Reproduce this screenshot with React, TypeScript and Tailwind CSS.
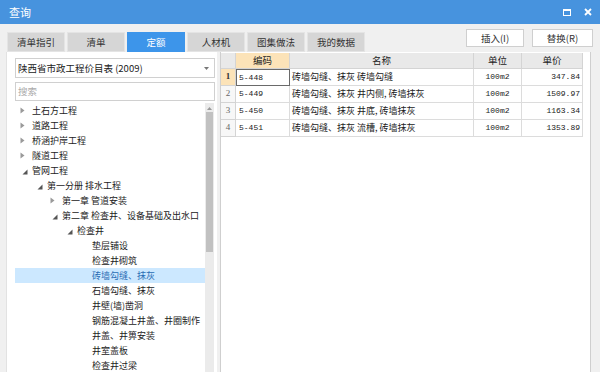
import React from "react";

type Node = { l: number; t: string; s?: "c" | "e"; sel?: boolean };

const tree: Node[] = [
  { l: 0, t: "土石方工程", s: "c" },
  { l: 0, t: "道路工程", s: "c" },
  { l: 0, t: "桥涵护岸工程", s: "c" },
  { l: 0, t: "隧道工程", s: "c" },
  { l: 0, t: "管网工程", s: "e" },
  { l: 1, t: "第一分册 排水工程", s: "e" },
  { l: 2, t: "第一章 管道安装", s: "c" },
  { l: 2, t: "第二章 检查井、设备基础及出水口", s: "e" },
  { l: 3, t: "检查井", s: "e" },
  { l: 4, t: "垫层铺设" },
  { l: 4, t: "检查井砌筑" },
  { l: 4, t: "砖墙勾缝、抹灰", sel: true },
  { l: 4, t: "石墙勾缝、抹灰" },
  { l: 4, t: "井壁(墙)凿洞" },
  { l: 4, t: "钢筋混凝土井盖、井圈制作" },
  { l: 4, t: "井盖、井箅安装" },
  { l: 4, t: "井室盖板" },
  { l: 4, t: "检查井过梁" },
];

const rows = [
  { n: "1", code: "5-448", name: "砖墙勾缝、抹灰 砖墙勾缝", unit: "100m2", price: "347.84" },
  { n: "2", code: "5-449", name: "砖墙勾缝、抹灰 井内侧, 砖墙抹灰", unit: "100m2", price: "1509.97" },
  { n: "3", code: "5-450", name: "砖墙勾缝、抹灰 井底, 砖墙抹灰", unit: "100m2", price: "1163.34" },
  { n: "4", code: "5-451", name: "砖墙勾缝、抹灰 流槽, 砖墙抹灰", unit: "100m2", price: "1353.89" },
];

const tabs = ["清单指引", "清单", "定额", "人材机", "图集做法", "我的数据"];

function Tri({ s }: { s?: "c" | "e" }) {
  if (s === "c")
    return (
      <svg width="5" height="7" viewBox="0 0 5 7" className="ml-[5px]">
        <path d="M0.5 0.5 L4.5 3.5 L0.5 6.5 Z" fill="#9a9a9a" />
      </svg>
    );
  if (s === "e")
    return (
      <svg width="6" height="6" viewBox="0 0 6 6" className="ml-[7px] mt-[3px]">
        <path d="M5.5 0.5 L5.5 5.5 L0.5 5.5 Z" fill="#555" />
      </svg>
    );
  return null;
}

export default function App() {
  return (
    <div
      className="w-[600px] h-[372px] overflow-hidden bg-[#f0f0f0] flex flex-col text-[#222]"
      style={{ fontFamily: '"Noto Sans CJK SC", "Liberation Sans", sans-serif' }}
    >
      {/* title bar */}
      <div className="h-[24px] shrink-0 bg-[#4793de] flex items-center pl-[9px] pr-[8px] text-white">
        <span className="text-[11px] leading-none">查询</span>
        <div className="ml-auto flex items-center gap-[13px]">
          <div className="w-[8px] h-[7px] border border-white border-t-[2px]" />
          <svg width="8" height="8" viewBox="0 0 8 8">
            <path d="M1 1 L7 7 M7 1 L1 7" stroke="white" strokeWidth="1.8" />
          </svg>
        </div>
      </div>

      {/* tab row */}
      <div className="h-[28px] shrink-0 flex pl-[7px] pr-[7px]">
        <div className="flex gap-[2px] self-end">
          {tabs.map((t) => (
            <div
              key={t}
              className={
                t === "定额"
                  ? "w-[58px] h-[20px] flex items-center justify-center text-[9.5px] bg-[#3d95ea] text-white border border-[#3d95ea]"
                  : "w-[58px] h-[20px] flex items-center justify-center text-[9.5px] bg-[#d6d6d6] text-[#333] border border-[#e4e4e4]"
              }
            >
              {t}
            </div>
          ))}
        </div>
        <div className="ml-auto flex gap-[8px] pt-[5px]">
          <div className="w-[58px] h-[18px] bg-white border border-[#cfcfcf] flex items-center justify-center text-[9.5px] text-[#333]">
            插入(I)
          </div>
          <div className="w-[61px] h-[18px] bg-white border border-[#cfcfcf] flex items-center justify-center text-[9.5px] text-[#333]">
            替换(R)
          </div>
        </div>
      </div>

      {/* content */}
      <div className="flex-1 flex min-h-0">
        {/* left panel */}
        <div className="w-[211px] ml-[6px] bg-white flex flex-col pl-[8px] pr-[3px] pt-[6px] border-l border-[#e2e2e2]">
          <div className="w-[200px] h-[20px] border border-[#d0d0d0] flex items-center pl-[2px] pr-[5px] text-[9.5px]">
            <span>陕西省市政工程价目表 (2009)</span>
            <svg width="5" height="3" viewBox="0 0 5 3" className="ml-auto">
              <path d="M0 0 L5 0 L2.5 3 Z" fill="#777" />
            </svg>
          </div>
          <div className="w-[200px] h-[19px] mt-[4px] border border-[#d0d0d0] flex items-center pl-[2px] text-[9.5px] text-[#aaa]">
            搜索
          </div>
          <div className="flex mt-[2px] flex-1 min-h-0">
            <div className="w-[191px] flex flex-col">
              {tree.map((n, i) => (
                <div
                  key={i}
                  className={
                    n.sel
                      ? "h-[15px] shrink-0 flex items-center bg-[#cce8ff] text-[#2a6db5]"
                      : "h-[15px] shrink-0 flex items-center"
                  }
                >
                  <div style={{ width: 15 * n.l }} className="shrink-0" />
                  <div className="w-[17px] shrink-0 flex items-center">
                    <Tri s={n.s} />
                  </div>
                  <span className="text-[9px] whitespace-nowrap leading-none">{n.t}</span>
                </div>
              ))}
            </div>
            <div className="w-[9px] ml-[0px] bg-[#ebebeb] flex flex-col items-center">
              <svg width="5" height="3" viewBox="0 0 5 3" className="mt-[4px]">
                <path d="M0 3 L5 3 L2.5 0 Z" fill="#999" />
              </svg>
              <div className="w-[7px] h-[140px] mt-[2px] bg-[#c1c1c1]" />
            </div>
          </div>
        </div>

        {/* right panel */}
        <div className="w-[371px] ml-[3px] bg-white border-l border-r border-[#cfcfcf] pt-[1px]">
          <div className="flex h-[16px] text-[9.5px]">
            <div className="w-[15px] bg-[#e9e9e9] border-r border-b border-[#d4d4d4]" />
            <div className="w-[54px] bg-[#fce3b8] border-r border-b border-[#d4d4d4] flex items-center justify-center">
              编码
            </div>
            <div className="w-[184px] bg-[#e9e9e9] border-r border-b border-[#d4d4d4] flex items-center justify-center">
              名称
            </div>
            <div className="w-[48px] bg-[#e9e9e9] border-r border-b border-[#d4d4d4] flex items-center justify-center">
              单位
            </div>
            <div className="w-[61px] bg-[#e9e9e9] border-r border-b border-[#d4d4d4] flex items-center justify-center">
              单价
            </div>
          </div>
          {rows.map((r, i) => (
            <div key={r.n} className="flex h-[17px] text-[9px]">
              <div
                className={
                  i === 0
                    ? "w-[15px] bg-[#fce3b8] border-r border-b border-[#d4d4d4] flex items-center justify-center font-bold text-[#333]"
                    : "w-[15px] bg-[#f7f7f7] border-r border-b border-[#d4d4d4] flex items-center justify-center text-[#666]"
                }
                style={{ fontFamily: '"Liberation Serif", serif' }}
              >
                {r.n}
              </div>
              <div
                className={
                  i === 0
                    ? "w-[54px] border border-[#6a6a6a] flex items-center pl-[2px] text-[8px]"
                    : "w-[54px] border-r border-b border-[#dcdcdc] flex items-center pl-[3px] text-[8px]"
                }
                style={{ fontFamily: '"Liberation Mono", monospace' }}
              >
                {r.code}
              </div>
              <div className="w-[184px] border-r border-b border-[#dcdcdc] flex items-center pl-[2px] whitespace-nowrap">
                {r.name}
              </div>
              <div
                className="w-[48px] border-r border-b border-[#dcdcdc] flex items-center justify-center text-[8px]"
                style={{ fontFamily: '"Liberation Mono", monospace' }}
              >
                {r.unit}
              </div>
              <div
                className="w-[61px] border-r border-b border-[#dcdcdc] flex items-center justify-end pr-[2px] text-[8px]"
                style={{ fontFamily: '"Liberation Mono", monospace' }}
              >
                {r.price}
              </div>
            </div>
          ))}
        </div>
      </div>
    </div>
  );
}
